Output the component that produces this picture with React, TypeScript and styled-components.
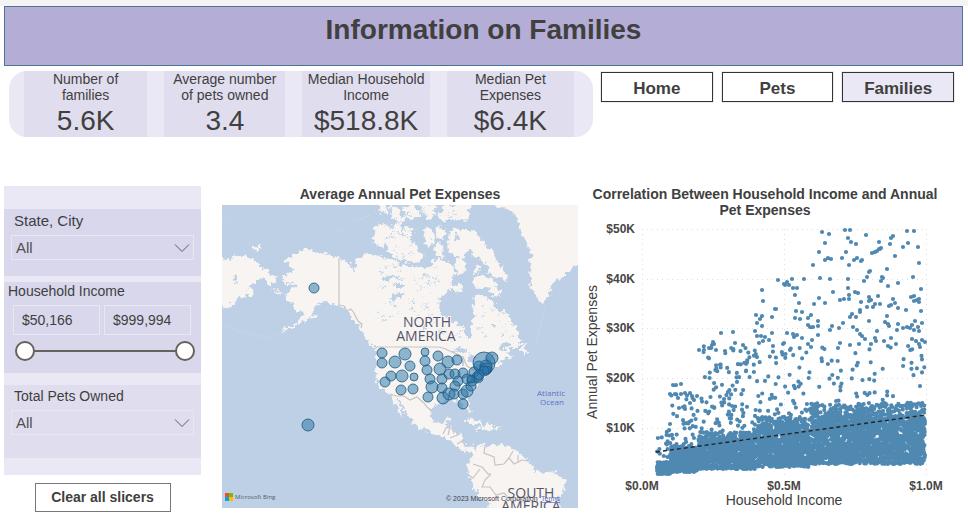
import React from "react";
import styled, { createGlobalStyle } from "styled-components";

const GlobalStyle = createGlobalStyle`
  *, *::before, *::after { box-sizing: border-box; }
  body {
    margin: 0;
    background: #ffffff;
    color: #404040;
    font-family: "Liberation Sans", Arial, Helvetica, sans-serif;
    font-size: 14px;
    line-height: 16px;
  }
`;

const Page = styled.div`
  border-top: 6px solid #f4f4f4;
  padding: 0 5px 12px 4px;
`;

const Banner = styled.header`
  height: 60px;
  padding-top: 6px;
  border: 1px solid #4b7595;
  background: #b4add6;
  text-align: center;
`;

const BannerTitle = styled.h1`
  margin: 0;
  font-size: 28px;
  line-height: 34px;
`;

const SummaryRow = styled.section`
  display: grid;
  grid-template-columns: 584fr 353fr;
  align-items: start;
  gap: 8px;
  padding: 5px 9px 0 5px;
`;

const KpiBar = styled.div`
  display: grid;
  grid-template-columns: 123fr 121fr 127fr 127fr;
  gap: 17px;
  padding: 0 19px 0 15px;
  border-radius: 18px;
  background: #eae8f4;
`;

const KpiCard = styled.div`
  height: 66px;
  background: #e0ddee;
  text-align: center;
  white-space: nowrap;
`;

const KpiLabel = styled.div`
  white-space: pre-line;
`;

const KpiValue = styled.div`
  padding-top: 3px;
  font-size: 28px;
  line-height: 30px;
`;

const Nav = styled.nav`
  display: grid;
  grid-template-columns: repeat(3, 1fr);
  gap: 9px;
  padding-top: 1px;
`;

const NavButton = styled.button<{ $active?: boolean }>`
  height: 30px;
  padding: 3px 0 0;
  border: 1px solid #333333;
  outline: 1px solid #ececec;
  background: ${(p) => (p.$active ? "#eae8f4" : "#ffffff")};
  color: #404040;
  font: bold 17px/24px "Liberation Sans", Arial, sans-serif;
`;

const Main = styled.main`
  display: grid;
  grid-template-columns: 197px minmax(0, 370fr) minmax(0, 368fr);
  column-gap: 7px;
  align-items: start;
  padding: 49px 10px 0 0;
`;

const Sidebar = styled.aside`
  text-align: center;
`;

const SlicerPanel = styled.div`
  padding: 23px 0 17px;
  background: #eae8f4;
  text-align: left;
`;

const Slicer = styled.div<{ $tone: string; $height: number; $gap?: number }>`
  height: ${(p) => p.$height}px;
  margin-bottom: ${(p) => p.$gap ?? 0}px;
  background: ${(p) => p.$tone};
`;

const SlicerLabel = styled.label<{ $size: number; $left: number; $top: number; $height: number }>`
  display: block;
  padding: ${(p) => p.$top}px 0 0 ${(p) => p.$left}px;
  height: ${(p) => p.$height}px;
  font-size: ${(p) => p.$size}px;
  line-height: 18px;
`;

const SelectWrap = styled.div`
  display: grid;
  align-items: center;
  margin: 0 7px;
  svg { grid-area: 1 / 1; justify-self: end; margin-right: 4px; pointer-events: none; z-index: 1; }
`;

const Select = styled.select`
  grid-area: 1 / 1;
  appearance: none;
  width: 100%;
  height: 25px;
  padding: 0 4px;
  border: 1px solid #e8e6f0;
  border-radius: 0;
  background: transparent;
  color: #505050;
  font: 15px/20px "Liberation Sans", Arial, sans-serif;
`;

const RangeFields = styled.div`
  display: grid;
  grid-template-columns: 1fr 1fr;
  gap: 4px;
  padding: 0 10px 0 9px;
`;

const RangeField = styled.input`
  min-width: 0;
  height: 30px;
  padding: 0 8px;
  border: 1px solid #e8e6f0;
  background: transparent;
  color: #404040;
  font: 14px/18px "Liberation Sans", Arial, sans-serif;
`;

const RangeTrack = styled.div`
  display: grid;
  align-items: center;
  margin: 6px 6px 0 11px;
  &::before { content: ""; grid-area: 1 / 1; height: 2px; margin: 0 10px; background: #66635f; }
`;

const RangeInput = styled.input`
  grid-area: 1 / 1;
  appearance: none;
  width: 100%;
  height: 20px;
  margin: 0;
  background: transparent;
  pointer-events: none;
  &::-webkit-slider-thumb {
    appearance: none;
    width: 20px;
    height: 20px;
    border: 2px solid #66635f;
    border-radius: 50%;
    background: #ffffff;
    pointer-events: auto;
  }
`;

const ClearButton = styled.button`
  width: 136px;
  height: 29px;
  margin-top: 8px;
  padding: 0 0 2px;
  border: 1px solid #777777;
  background: #ffffff;
  color: #404040;
  font: bold 14px/20px "Liberation Sans", Arial, sans-serif;
`;

const Visual = styled.section<{ $left?: number }>`
  padding-left: ${(p) => p.$left ?? 0}px;
  svg { display: block; width: 100%; height: auto; }
`;

const VisualTitle = styled.h2`
  margin: 0;
  padding-bottom: 3px;
  font-size: 14px;
  line-height: 16px;
  text-align: center;
`;

const ChartTitle = styled(VisualTitle)`
  padding: 0 12px 3px 4px;
`;

const kpis = [
  { label: "Number of\nfamilies", value: "5.6K" },
  { label: "Average number\nof pets owned", value: "3.4" },
  { label: "Median Household\nIncome", value: "$518.8K" },
  { label: "Median Pet\nExpenses", value: "$6.4K" },
];

const Chevron = () => (
  <svg width="16" height="10" viewBox="0 0 16 10" fill="none" stroke="#5c5c66" strokeWidth="1">
    <path d="M1 1.5 8 8.5 15 1.5" />
  </svg>
);

function makeRandom(seed: number) {
  let s = seed;
  return () => {
    s = (s * 1664525 + 1013904223) >>> 0;
    return s / 4294967296;
  };
}

const land = [
  // Siberia
  "M216 257 230 260 235 256 245 257 252 259 257 263 262 268 267 271 270 275 277 277 273 284 267 283 264 278 258 278 255 284 247 286 253 291 252 295 240 297 232 304 227 307 216 305Z",
  "M253 248 256 245 260 246 261 249 256 250Z",
  "M273 291 279 291 280 293 275 292Z",
  // North and Central America
  "M306 249 298 252 292 255 286 260 291 267 297 271 289 273 283 278 287 284 295 282 298 286 290 290 286 295 287 301 293 303 295 311 303 311 305 315 299 322 290 327 282 331 292 328 301 323 309 317 313 311 318 304 323 301 330 304 339 305 347 309 352 315 357 323 362 329 366 337 371 344 377 350 376 360 375 370 377 379 382 388 390 394 394 402 398 409 403 416 402 409 396 400 396 396 402 404 408 414 414 424 428 431 438 434 445 437 454 443 460 449 464 451 472 450 475 453 473 446 465 447 461 441 460 434 451 433 453 428 446 427 444 424 450 421 451 418 445 420 440 425 433 422 430 414 432 407 438 402 448 399 455 400 461 400 467 409 470 411 469 403 467 397 473 391 478 384 482 378 488 374 492 369 498 365 502 360 510 358 513 355 504 354 511 348 520 346 522 341 517 336 518 331 512 323 503 308 499 313 494 304 488 298 480 295 474 297 473 307 475 317 470 327 472 338 467 339 463 327 455 323 444 317 438 310 438 300 445 292 453 288 449 281 455 273 448 262 435 260 428 268 415 267 402 265 395 261 382 258 368 254 358 258 354 270 349 264 343 260 328 255 315 252Z",
  // Pacific coast islands
  "M368 341 374 344 378 350 370 346Z",
  "M311 317 315 314 315 317 311 320Z",
  // Newfoundland
  "M518 350 525 343 524 349 527 353 521 352Z",
  // Arctic archipelago
  "M375 227 380 224 388 226 394 231 387 238 382 247 374 243Z",
  "M386 241 394 233 405 236 410 240 415 243 416 249 423 255 420 261 408 262 397 259 388 250Z",
  "M378 208 386 205 389 213 382 213Z M391 206 399 209 399 215 406 219 401 222 392 217Z M403 207 411 205 421 213 413 220 407 217Z M422 205 434 205 436 214 428 220 423 214Z M444 205 469 205 468 221 458 218 444 222 439 217Z",
  "M392 225 400 223 402 232 395 232Z M404 227 412 229 411 238 404 234Z M424 229 431 228 433 243 427 245Z M436 228 446 228 443 237 437 238Z M435 246 440 243 443 257 436 255Z",
  "M449 232 456 229 474 231 480 240 490 249 495 258 507 276 505 281 499 279 490 273 488 265 479 258 467 254 462 258 456 256 449 250Z",
  "M455 261 461 257 465 262 464 272 458 274Z M472 278 478 275 492 279 501 294 494 296 487 288 477 287Z M475 267 480 268 479 272 475 271Z M453 288 459 283 464 289 456 292Z",
  // Greenland
  "M493 205 512 210 519 222 522 237 527 243 532 253 530 270 532 287 538 300 543 303 548 297 551 284 562 277 572 267 584 264 584 200 493 200Z",
  // Caribbean
  "M463 420 471 418 481 423 484 426 476 425 470 421Z M482 427 488 424 494 427 490 429 483 429Z M496 427 500 427 499 429 496 429Z M475 428 479 429 478 431 475 430Z",
  // South America
  "M475 450 483 443 485 447 495 445 512 448 522 455 530 462 534 472 555 473 565 482 563 490 557 498 557 514 493 514 490 503 480 497 473 485 468 473 468 465 473 458Z",
];

const water =
  "M452 351 459 347 467 350 466 354 458 351Z M463 356 465 363 461 366 460 358Z M468 354 476 357 475 363 470 361Z M474 368 484 363 484 366 475 369Z M486 358 490 358 490 361 484 362Z M382 278 395 275 397 278 384 281Z M388 298 403 291 405 294 393 300Z M397 285 405 285 404 288 397 288Z M423 322 427 325 425 331 421 326Z M352 266 354 265 355 273 351 269Z M235 283 238 275 235 274 233 283Z M463 260 469 249 473 253 466 260Z M459 233 457 244 454 242 456 233Z M391 305 399 307 393 308Z M409 303 414 300 413 303Z M489 325 498 325 495 327Z M502 343 514 343 503 350 498 350Z";

const borders =
  "M339 258V305 M339 305 344 306 347 311 351 309 354 313 358 321 362 324 361 328 M375 347H438 L443 348 452 352 463 357 467 366 474 370 483 366 490 361 493 354 498 356 M390 394 396 396 404 396 410 400 417 397 424 403 427 407 432 411 M443 434 446 428 450 427 448 435 M450 438 460 434 M457 444 464 440 M485 445 484 453 494 457 495 465 504 464 509 458 513 451 M509 458 514 464 522 460 528 461 M518 455 518 463 M473 464 482 467 488 474 491 474 M468 475 473 478 480 469 M491 474 485 480 482 487 490 487 496 495 504 493 513 502 520 499 526 505";

function buildLakes() {
  const rnd = makeRandom(19);
  const lake = (x0: number, y0: number, w: number, h: number) => {
    const x = x0 + rnd() * w;
    const y = y0 + rnd() * h;
    const dx = 1 + rnd() * 3;
    const dy = rnd() * 3 - 2;
    return `M${x.toFixed(1)} ${y.toFixed(1)}l${dx.toFixed(1)} ${dy.toFixed(1)}`;
  };
  const parts: string[] = [];
  for (let i = 0; i < 75; i++) parts.push(lake(374, 266, 62, 56));
  for (let i = 0; i < 16; i++) parts.push(lake(430, 318, 34, 26));
  for (let i = 0; i < 22; i++) parts.push(lake(477, 305, 34, 34));
  for (let i = 0; i < 24; i++) parts.push(lake(386, 232, 38, 28));
  for (let i = 0; i < 18; i++) parts.push(lake(378, 206, 90, 14));
  return parts.join("");
}
const lakes = buildLakes();

const bubbles: [number, number, number][] = [
  [314, 288, 5], [308, 425, 6], [382, 353, 5], [382, 363, 5], [395, 362, 6], [405, 354, 6],
  [391, 376, 5], [385, 382, 5], [402, 376, 6], [401, 390, 5], [410, 366, 5], [414, 377, 4],
  [413, 389, 5], [425, 352, 4], [425, 361, 5], [427, 370, 5], [430, 379, 5], [432, 387, 6],
  [428, 397, 5], [438, 356, 5], [440, 369, 6], [442, 379, 5], [442, 388, 5], [443, 398, 6],
  [448, 362, 6], [457, 360, 5], [449, 374, 5], [455, 374, 5], [463, 373, 5], [458, 381, 5],
  [455, 386, 5], [449, 394, 6], [454, 394, 5], [463, 394, 5], [463, 404, 5], [467, 391, 6],
  [471, 386, 5], [467, 379, 5], [472, 381, 5], [474, 372, 5], [478, 378, 5], [479, 366, 5],
  [484, 363, 11], [492, 358, 6], [486, 366, 6], [486, 369, 6], [487, 370, 4], [477, 377, 5],
  [484, 371, 5], [471, 379, 4], [479, 375, 5],
];

const specks = "227,426 234,451 236,462 248,480 250,485 274,474 297,457 307,479 340,485 342,486 252,503 256,504 331,503 299,420 279,431 445,464 452,491 243,331 252,335 270,338 285,331 289,329";

function ExpenseMap() {
  return (
    <svg viewBox="222 205 356 303" role="img" aria-label="Map of average annual pet expenses by state">
      <defs>
        <filter id="coast" x="-5%" y="-5%" width="110%" height="110%" colorInterpolationFilters="sRGB">
          <feTurbulence type="fractalNoise" baseFrequency="0.22" numOctaves="3" seed="8" />
          <feDisplacementMap in="SourceGraphic" scale="9" xChannelSelector="R" yChannelSelector="G" />
        </filter>
      </defs>
      <rect x="222" y="205" width="356" height="303" fill="#bdd0e5" />
      <g filter="url(#coast)">
        <path d={land.join(" ")} fill="#f7f4f2" stroke="#f7f4f2" strokeWidth="1" />
        <path d={water} fill="#bdd0e5" />
        <path d={lakes} fill="none" stroke="#bdd0e5" strokeWidth="1" />
      </g>
      <path d={borders} fill="none" stroke="#c9c4c1" strokeWidth="1.2" />
      <path
        d={"M222 216 236 229M245 239 251 245M334 232 343 228M353 222 371 215M536 343 545 308M222 325 242 332 270 338 289 330" +
          specks.split(" ").map((p) => `M${p.replace(",", " ")}h1`).join("")}
        fill="none" stroke="#cbd9e7" strokeWidth="0.7"
      />
      <g fill="#55556a" fontSize="14" fontFamily='"Open Sans", "Noto Sans", sans-serif' textAnchor="middle" stroke="#f7f4f2" strokeWidth="2" paintOrder="stroke">
        <text x="427" y="327">NORTH</text>
        <text x="426" y="341">AMERICA</text>
        <text x="531" y="498">SOUTH</text>
        <text x="531" y="511">AMERICA</text>
      </g>
      <g fill="#5c72c6" fontSize="8" fontFamily='"Open Sans", "Noto Sans", sans-serif' textAnchor="middle">
        <text x="551" y="396">Atlantic</text>
        <text x="552" y="405">Ocean</text>
      </g>
      <g fill="#2374a8" fillOpacity="0.5" stroke="#1d5680" strokeOpacity="0.8">
        {bubbles.map(([x, y, r], i) => <circle key={i} cx={x} cy={y} r={r} />)}
      </g>
      <path d="M225 493h4v4h-4z" fill="#f25022" /><path d="M229 493h4v4h-4z" fill="#7fba00" />
      <path d="M225 497h4v4h-4z" fill="#00a4ef" /><path d="M229 497h4v4h-4z" fill="#ffb900" />
      <g fontFamily='"Open Sans", "Noto Sans", sans-serif'>
        <text x="235" y="499" fontSize="6" fill="#55606a">Microsoft Bing</text>
        <g fontSize="7" fontFamily='"Liberation Sans", sans-serif'>
          <text x="446" y="501" fill="#40404a">© 2023 Microsoft Corporation</text>
          <a href="#terms"><text x="541" y="501" fill="#5c72c6" textDecoration="underline">Terms</text></a>
        </g>
      </g>
    </svg>
  );
}

// Household samples above the dense band, as x,y pairs in plot units.
const outliers = `
822,232 829,234 845,230 850,230 848,238 851,242 856,244 866,235 825,243 819,252 825,260 828,258 831,259 813,265 846,252 842,258
849,265 854,260 857,258 861,261 862,260 872,253 875,252 877,251 879,249 880,249 881,248 879,242 890,244 891,238 893,236 907,231 914,231
903,247 908,243 918,247 895,256 919,263 887,269 869,272 870,271 867,277 864,281 883,278 881,281 882,277 888,286 898,283 913,277 921,289
820,278 830,279 848,279 848,288 855,292 858,293 849,295 849,299 833,292 840,300 844,299 825,303 819,298 814,304 795,295 799,303 804,279
792,279 785,285 787,282 789,285 793,288 797,288 784,284 778,280 796,311 802,312 808,318 811,315 818,321 795,318 800,319 808,325 810,327 813,327 818,326
776,309 772,317 762,290 763,301 775,309 756,315 762,316 760,319 757,323 762,326 755,331 721,333 733,332 757,336 761,336 765,337 763,341 769,340 759,343 772,333 773,346
735,343 743,345 713,342 714,344 709,348 711,348 712,345 704,350 699,350 716,350 787,333 793,334 794,337 797,335 802,338 784,343 783,344 790,350 808,344 812,340 818,335 811,347
830,330 832,326 839,328 843,323 850,317 852,314 856,317 860,310 860,312 861,302 867,307 869,297 869,301 871,300 873,307 875,304 878,296 880,304 889,306 891,305 893,299 895,303 898,308 906,310 887,316 885,322 888,324 889,326 898,324 897,330 903,328 907,327 910,328 912,325 914,330 918,327 915,321 922,323 919,331 912,339 916,341 919,344 922,340 925,342 920,347
869,321 853,327 857,330 860,334 862,336 865,339 871,344 875,338 876,341 884,341 888,346 891,338 896,344 877,331 840,343 850,345 859,344 838,348
921,311 911,297 914,296 917,300 919,302 919,299 914,301
673,385 676,385 681,384 670,394 675,394 678,398 681,394 685,393 690,393 692,396 697,396 694,400 690,403 679,408 683,407 670,424`.trim().split(/\s+/);

const steps = [
  { from: 657, to: 670, top: 462, solid: 464, bottom: 474, count: 170 },
  { from: 671, to: 698, top: 446, solid: 451, bottom: 472, count: 430 },
  { from: 699, to: 756, top: 432, solid: 439, bottom: 469, count: 800 },
  { from: 757, to: 810, top: 417, solid: 425, bottom: 467, count: 860 },
  { from: 811, to: 925, top: 403, solid: 415, bottom: 464, count: 1850 },
];

const sparse = [
  { from: 657, to: 675, top: 430, bottom: 458, count: 20 },
  { from: 670, to: 699, top: 390, bottom: 447, count: 36 },
  { from: 699, to: 757, top: 346, bottom: 432, count: 108 },
  { from: 757, to: 811, top: 347, bottom: 415, count: 55 },
  { from: 811, to: 925, top: 346, bottom: 404, count: 62 },
];

function buildDots() {
  const rnd = makeRandom(77);
  const dots = outliers.map((p) => `M${p.replace(",", " ")}h0`);
  const add = (x: number, y: number) => dots.push(`M${x.toFixed(1)} ${y.toFixed(1)}h0`);
  for (const s of sparse) {
    for (let i = 0; i < s.count; i++) add(s.from + rnd() * (s.to - s.from), s.top + rnd() * (s.bottom - s.top));
  }
  for (const s of steps) {
    for (let i = 0; i < s.count; i++) add(s.from + rnd() * (s.to - s.from), s.solid + rnd() * (s.bottom - s.solid));
    // The upper fringe of each step is thinner than its body.
    const fringe = (s.to - s.from) * 1.5;
    for (let i = 0; i < fringe; i++) add(s.from + rnd() * (s.to - s.from), s.top + rnd() * (s.solid - s.top));
  }
  return dots.join("");
}

const dotPath = buildDots();
const yTicks: [string, number][] = [["$50K", 229], ["$40K", 279], ["$30K", 328], ["$20K", 378], ["$10K", 428]];
const xTicks: [string, number][] = [["$0.0M", 642], ["$0.5M", 784], ["$1.0M", 926]];

function ScatterChart() {
  return (
    <svg viewBox="585 221 368 287" role="img" aria-label="Household income against annual pet expenses" fontFamily='"Liberation Sans", Arial, sans-serif'>
      <g stroke="#dedede" strokeDasharray="1 4">
        {yTicks.map(([t, y]) => <path key={t} d={`M642 ${y}.5H926`} />)}
        {xTicks.map(([t, x]) => <path key={t} d={`M${x}.5 229V476`} />)}
      </g>
      <path d={dotPath} fill="none" stroke="#4682ad" strokeWidth="4.2" strokeLinecap="round" opacity="0.95" />
      <path d="M656 452 926 415" stroke="#252525" strokeWidth="1.4" strokeDasharray="4 3" />
      <g fill="#484644" fontSize="12" fontWeight="bold">
        {yTicks.map(([t, y]) => <text key={t} x="635" y={y + 4} textAnchor="end">{t}</text>)}
        {xTicks.map(([t, x]) => <text key={t} x={x} y="490" textAnchor="middle">{t}</text>)}
      </g>
      <g fill="#404040" fontSize="14" textAnchor="middle">
        <text x="784" y="505">Household Income</text>
        <text transform="translate(597 352) rotate(-90)">Annual Pet Expenses</text>
      </g>
    </svg>
  );
}

export default function App() {
  return (
    <Page>
      <GlobalStyle />
      <Banner><BannerTitle>Information on Families</BannerTitle></Banner>
      <SummaryRow>
        <KpiBar>
          {kpis.map((k) => (
            <KpiCard key={k.value}>
              <KpiLabel>{k.label}</KpiLabel>
              <KpiValue>{k.value}</KpiValue>
            </KpiCard>
          ))}
        </KpiBar>
        <Nav>
          <NavButton>Home</NavButton>
          <NavButton>Pets</NavButton>
          <NavButton $active aria-current="page">Families</NavButton>
        </Nav>
      </SummaryRow>
      <Main>
        <Sidebar>
          <SlicerPanel>
            <Slicer $tone="#d9d7ec" $height={67} $gap={6}>
              <SlicerLabel htmlFor="place" $size={15} $left={10} $top={3} $height={26}>State, City</SlicerLabel>
              <SelectWrap><Select id="place"><option>All</option></Select><Chevron /></SelectWrap>
            </Slicer>
            <Slicer $tone="#d9d7ec" $height={91} $gap={12}>
              <SlicerLabel as="div" $size={14} $left={4} $top={0} $height={23}>Household Income</SlicerLabel>
              <RangeFields>
                <RangeField aria-label="Minimum household income" defaultValue="$50,166" />
                <RangeField aria-label="Maximum household income" defaultValue="$999,994" />
              </RangeFields>
              <RangeTrack>
                <RangeInput type="range" aria-label="Lower bound" min={50166} max={999994} defaultValue={50166} />
                <RangeInput type="range" aria-label="Upper bound" min={50166} max={999994} defaultValue={999994} />
              </RangeTrack>
            </Slicer>
            <Slicer $tone="#e0ddee" $height={73}>
              <SlicerLabel htmlFor="pets" $size={14} $left={10} $top={2} $height={25}>Total Pets Owned</SlicerLabel>
              <SelectWrap><Select id="pets"><option>All</option></Select><Chevron /></SelectWrap>
            </Slicer>
          </SlicerPanel>
          <ClearButton>Clear all slicers</ClearButton>
        </Sidebar>
        <Visual $left={14}>
          <VisualTitle>Average Annual Pet Expenses</VisualTitle>
          <ExpenseMap />
        </Visual>
        <Visual>
          <ChartTitle>Correlation Between Household Income and Annual Pet Expenses</ChartTitle>
          <ScatterChart />
        </Visual>
      </Main>
    </Page>
  );
}
